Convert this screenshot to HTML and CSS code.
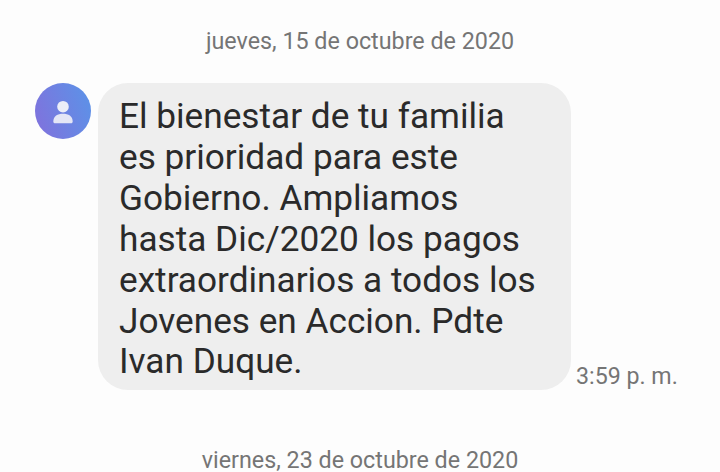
FILE: index.html
```html
<!DOCTYPE html>
<html lang="es">
<head>
<meta charset="utf-8">
<title>Mensajes</title>
<link rel="stylesheet" href="styles.css">
</head>
<body>
<main class="thread">
<div class="date date-first">jueves, 15 de octubre de 2020</div>
<div class="message">
<div class="avatar">
<svg viewBox="0 0 56 56" width="56" height="56"><circle cx="28" cy="23.700" r="5.800" fill="#eceef8"/><path d="M18.300 38.500c0-5.500 4.300-7.800 9.700-7.800s9.700 2.300 9.700 7.800c0 1.100-.7 1.800-1.700 1.800H20c-1 0-1.700-.7-1.700-1.800z" fill="#e4e6f6"/></svg>
</div>
<div class="bubble">El bienestar de tu familia<br>es prioridad para este<br>Gobierno. Ampliamos<br>hasta Dic/2020 los pagos<br>extraordinarios a todos los<br>Jovenes en Accion. Pdte<br>Ivan Duque.</div>
<div class="time">3:59 p. m.</div>
</div>
<div class="date date-second">viernes, 23 de octubre de 2020</div>
</main>
</body>
</html>
```
FILE: styles.css
```css
html, body { margin: 0; padding: 0; }
body { width: 720px; height: 472px; overflow: hidden; background: #fdfdfd; font-family: Roboto, sans-serif; }
.thread { display: flex; flex-direction: column; }
.date { text-align: center; font-size: 23.300px; line-height: 24px; color: #757575; }
.date-first { margin-top: 29px; }
.date-second { margin-top: 58px; }
.message { display: flex; align-items: flex-end; margin-top: 30px; padding-left: 35px; }
.avatar { align-self: flex-start; width: 56px; height: 56px; border-radius: 50%; background: linear-gradient(70deg, #8270dc, #5a94e8); }
.bubble { margin-left: 7px; width: 473px; box-sizing: border-box; padding: 13px 21px 8px; background: #eeeeee; border-radius: 30px; font-size: 35.200px; line-height: 40.900px; color: #2a2a2a; }
.time { margin-left: 5px; margin-bottom: 1px; font-size: 23.200px; line-height: 26px; color: #757575; white-space: nowrap; }
```
